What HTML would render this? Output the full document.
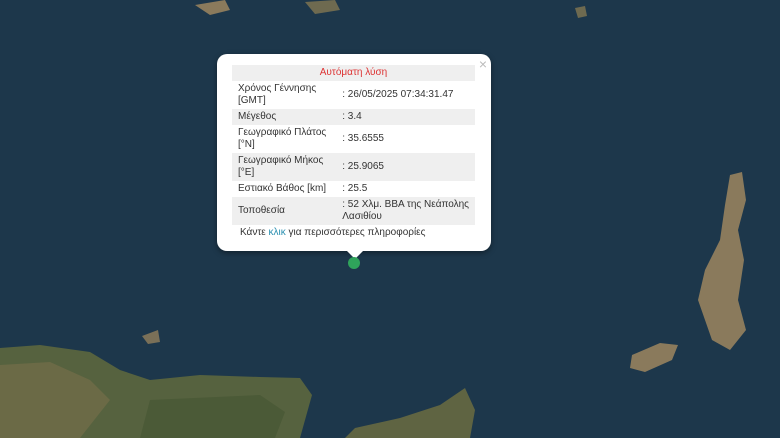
<!DOCTYPE html>
<html><head><meta charset="utf-8"><style>
body{margin:0;width:780px;height:438px;overflow:hidden;background:#1c3549;font-family:"Liberation Sans",sans-serif}
#m{position:absolute;left:0;top:0}
.pop{position:absolute;left:217px;top:54px;width:274px;height:197px;background:#fff;border-radius:10px;box-shadow:0 2px 6px rgba(0,0,0,.4)}
.tip{position:absolute;left:346px;top:250px;width:0;height:0;border-left:9px solid transparent;border-right:9px solid transparent;border-top:9px solid #fff}
.x{position:absolute;right:4px;top:2px;color:#bbb;font-size:14px}
table{position:absolute;left:15px;top:11px;width:243px;border-collapse:collapse;font-size:10px;color:#333;line-height:12px}
td{padding:2px 6px;vertical-align:middle;white-space:nowrap}
td.l{width:94px}
tr.g td{background:#efefef}
.t td{background:#efefef;text-align:center;color:#d33;padding:2px}
.f{position:absolute;left:23px;top:173px;font-size:10px;color:#333}
.f span{color:#2a8fb0}
.dot{position:absolute;left:348px;top:257px;width:12px;height:12px;border-radius:50%;background:#2fa35b}
</style></head><body>
<svg id="m" width="780" height="438">
<rect width="780" height="438" fill="#1d374b"/>
<path d="M0 348 L40 345 L90 352 L120 370 L150 380 L200 375 L260 377 L300 378 L312 395 L300 438 L0 438Z" fill="#56623f"/>
<path d="M0 365 L50 362 L90 380 L110 400 L80 438 L0 438Z" fill="#6b6a46"/>
<path d="M150 400 L260 395 L285 412 L275 438 L140 438Z" fill="#4b5a37"/>
<path d="M355 428 L400 418 L440 405 L465 388 L475 410 L470 438 L345 438Z" fill="#5f6442"/>
<path d="M730 175 L742 172 L746 200 L738 230 L744 260 L738 300 L746 330 L730 350 L712 340 L698 300 L705 270 L720 240 L725 205Z" fill="#8a7a5c"/>
<path d="M632 355 L660 343 L678 345 L672 360 L645 372 L630 368Z" fill="#8a7a5c"/>
<path d="M195 5 L225 0 L230 10 L210 15Z" fill="#8a7a5c"/>
<path d="M305 2 L335 0 L340 10 L315 14Z" fill="#6e6a50"/>
<path d="M142 336 L158 330 L160 342 L148 344Z" fill="#7a7058"/>
<path d="M575 8 L585 6 L587 16 L578 18Z" fill="#6e6a50"/>
</svg>
<div class="pop"><div class="x">×</div>
<table>
<tr class="t"><td colspan="2">Αυτόματη λύση</td></tr>
<tr><td class="l">Χρόνος Γέννησης<br>[GMT]</td><td>: 26/05/2025 07:34:31.47</td></tr>
<tr class="g"><td class="l">Μέγεθος</td><td>: 3.4</td></tr>
<tr><td class="l">Γεωγραφικό Πλάτος<br>[°N]</td><td>: 35.6555</td></tr>
<tr class="g"><td class="l">Γεωγραφικό Μήκος<br>[°E]</td><td>: 25.9065</td></tr>
<tr><td class="l">Εστιακό Βάθος [km]</td><td>: 25.5</td></tr>
<tr class="g"><td class="l">Τοποθεσία</td><td>: 52 Χλμ. ΒΒΑ της Νεάπολης<br>Λασιθίου</td></tr>
</table>
<div class="f">Κάντε <span>κλικ</span> για περισσότερες πληροφορίες</div>
</div>
<div class="tip"></div>
<div class="dot"></div>
</body></html>
